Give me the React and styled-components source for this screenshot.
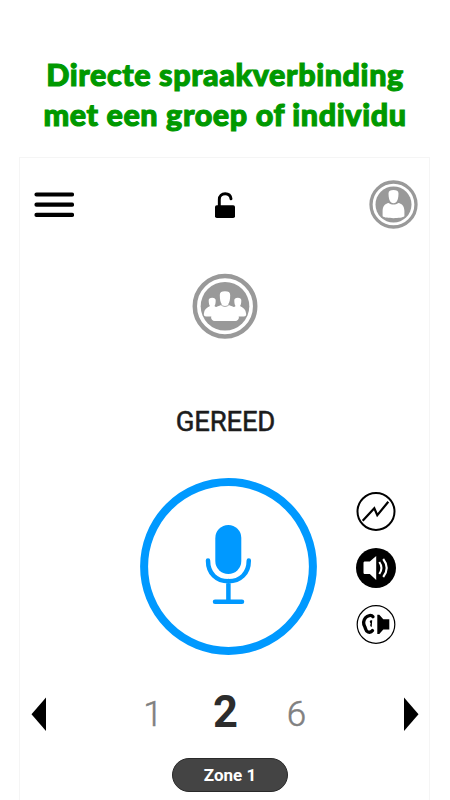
import React from "react";
import styled, { createGlobalStyle } from "styled-components";

const GlobalStyle = createGlobalStyle`
  * { box-sizing: border-box; }
  body { margin: 0; background: #fff; overflow: hidden; }
  svg { display: block; }
`;

const Page = styled.main`
  display: flex;
  flex-direction: column;
  width: 450px;
  height: 800px;
  overflow: hidden;
  background: #fff;
  font-family: Roboto, sans-serif;
`;

const Headline = styled.h1`
  display: flex;
  flex-direction: column;
  align-items: center;
  height: 157px;
  margin: 0;
  padding-top: 54px;
  color: #009900;
  font: 900 30.5px/40px Lato, sans-serif;
  -webkit-text-stroke: 1.1px #009900;
  white-space: nowrap;
`;

const HeadlineLine = styled.span`
  letter-spacing: ${({ $tracking }) => $tracking}px;
`;

const Phone = styled.section`
  display: flex;
  flex-direction: column;
  width: 411px;
  height: 643px;
  margin: 0 19px;
  border: solid #f5f5f5;
  border-width: 1px 1px 0;
`;

const TopBar = styled.header`
  display: flex;
  align-items: center;
  justify-content: space-between;
  height: 93px;
  padding: 0 11px 0 14px;
`;

const IconButton = styled.button`
  display: block;
  padding: 0;
  border: 0;
  background: none;
`;

const LockButton = styled(IconButton)`
  margin-left: 6px;
`;

const GroupRow = styled.div`
  display: flex;
  justify-content: center;
  margin: 22px 0 0 1px;
`;

const Status = styled.p`
  height: 34px;
  margin: 66px 0 0 2px;
  color: #1c1c1c;
  font-size: 27.5px;
  font-weight: 400;
  -webkit-text-stroke: 0.5px #1c1c1c;
  line-height: 34px;
  letter-spacing: ${({ $tracking }) => $tracking}px;
  text-align: center;
`;

const TalkRow = styled.div`
  display: flex;
  align-items: center;
  height: 178px;
  margin-top: 39px;
  padding-left: 120px;
`;

const Modes = styled.div`
  display: flex;
  flex-direction: column;
  gap: 14px;
  margin-left: 37px;
  padding-top: 2px;
`;

const Pager = styled.nav`
  display: grid;
  grid-template-columns: 16px 70px 72px 73px 69px 72px 16px;
  align-items: start;
  height: 61px;
  margin-top: 40px;
  padding-left: 11px;
`;

const Arrow = styled(IconButton)`
  grid-column: ${({ $column }) => $column};
  margin-top: 1px;
`;

const Channel = styled.span`
  grid-column: ${({ $column }) => $column};
  height: 44px;
  color: ${({ $active }) => ($active ? "#2c2c2c" : "#808080")};
  font-size: ${({ $active }) => ($active ? 43.5 : 35)}px;
  font-weight: ${({ $active }) => ($active ? 700 : 300)};
  -webkit-text-stroke: ${({ $active }) => ($active ? 0 : 0.5)}px #808080;
  line-height: ${({ $active }) => ($active ? 33 : 37)}px;
  text-align: center;
`;

const Zone = styled.button`
  align-self: center;
  width: 116px;
  height: 34px;
  margin: 1px 0 0 11px;
  padding: 0;
  border: 1px solid #292929;
  border-radius: 17px;
  background: #444;
  color: #fff;
  font: 700 17px/32px Roboto, sans-serif;
`;

const MenuIcon = () => (
  <svg width="40" height="28" viewBox="34 190.5 40 28">
    <path d="M36.5 194H72M36.5 204.200H72M36.5 214.400H72" stroke="#000" strokeWidth="4.2" strokeLinecap="round" />
  </svg>
);

const LockIcon = () => (
  <svg width="22" height="28" viewBox="0 0 22 28">
    <rect x="1" y="14.300" width="20" height="12.700" rx="1.800" />
    <path d="M5.300 15V8.500C5.300 4.900 7.800 2.800 11.200 2.800c3 0 5.400 2 5.800 5" fill="none" stroke="#000" strokeWidth="2.900" strokeLinecap="round" />
  </svg>
);

const AvatarIcon = () => (
  <svg width="49" height="49" viewBox="0 0 49 49">
    <circle cx="24.500" cy="24.500" r="22.500" fill="#fff" stroke="#999" strokeWidth="3.300" />
    <circle cx="24.500" cy="24.500" r="18" fill="#999" />
    <path fill="#fff" d="M19.500 13.500c0-2.500 2-3.400 5-3.400s5 .9 5 3.400c0 4.500-1 7.500-2.700 9.100q-2.300 1.500-4.600 0C20.500 21 19.500 18 19.500 13.500ZM19.800 22.900c1.300 1.200 3 1.600 4.700 1.600s3.400-.4 4.700-1.600c4.100.7 6 3.400 6.200 7.900v5.500c-2.800 2.500-19 2.500-21.800 0v-5.500c.2-4.500 2.100-7.200 6.200-7.900Z" />
  </svg>
);

const GroupIcon = () => (
  <svg width="66" height="66" viewBox="0 0 66 66">
    <circle cx="33" cy="33.200" r="30.200" fill="#fff" stroke="#999" strokeWidth="4.500" />
    <circle cx="33" cy="33.200" r="24.300" fill="#999" />
    <g fill="#fff">
      <path d="M27.800 22c0-2.800 1.700-3.800 5.200-3.800s5.200 1 5.200 3.800c0 4.700-.7 7.500-2 9.200 1.100 2.200 7.900 2 9.300 6l1.400 7.400c0 1.500-1.300 3.500-3.600 3.500H22.700c-2.300 0-3.600-2-3.600-3.500l1.400-7.400c1.400-4 8.200-3.800 9.300-6-1.300-1.700-2-4.500-2-9.200Z" />
      <path d="M16.700 27.400c0-1.900 1.200-2.700 3.500-2.700s3.500.8 3.500 2.700c0 2.500-.5 4.600-1.300 5.700 1.100 1.200 3.500 1.300 4.300 3.200v7.100H14.100c-1.600 0-2.600-1-2.200-3 .5-3.700 2.300-5.400 6.100-7.300-.8-1.100-1.300-3.200-1.300-5.700ZM49.300 27.400c0-1.900-1.200-2.700-3.500-2.700s-3.500.8-3.500 2.700c0 2.500.5 4.600 1.300 5.700-1.100 1.200-3.500 1.300-4.300 3.200v7.100h12.600c1.600 0 2.600-1 2.200-3-.5-3.700-2.300-5.400-6.100-7.300.8-1.100 1.300-3.200 1.300-5.700Z" />
    </g>
    <path d="M28.800 31.700q4.200 3.600 8.400 0" fill="none" stroke="#999" strokeWidth=".8" />
  </svg>
);

const TalkIcon = () => (
  <svg width="178" height="178" viewBox="0 0 178 178">
    <circle cx="88.500" cy="88.500" r="84.400" fill="none" stroke="#0099ff" strokeWidth="8" />
    <rect x="75.300" y="47" width="26" height="49" rx="13" fill="#0099ff" />
    <path d="M68 82.500c0 13 8.500 20.800 20.400 20.800s20.400-7.800 20.400-20.800M88.400 103v20.800M75 123.800h27" fill="none" stroke="#0099ff" strokeWidth="4.500" strokeLinecap="round" />
  </svg>
);

const PulseIcon = () => (
  <svg width="42" height="42" viewBox="0 0 42 42">
    <circle cx="21" cy="20.500" r="18.500" fill="#fff" stroke="#000" strokeWidth="2" />
    <path d="M7.700 29.800 19.300 17.200l3 7L33.300 10.800" fill="none" stroke="#000" strokeWidth="2.200" />
  </svg>
);

const SpeakerIcon = () => (
  <svg width="42" height="42" viewBox="0 0 42 42">
    <circle cx="21" cy="21" r="20" />
    <path d="M10 14.500h4.800l6.400-5.500v24l-6.400-6H10c-1 0-1.500-.5-1.500-1.500V16c0-1 .5-1.500 1.500-1.500Z" fill="#fff" />
    <path d="M24.300 15q4.300 6 0 12M28.200 12q7 9 0 18" fill="none" stroke="#fff" strokeWidth="2.100" />
  </svg>
);

const EarIcon = () => (
  <svg width="42" height="42" viewBox="0 0 42 42">
    <circle cx="21" cy="21.500" r="18.800" fill="#fff" stroke="#000" strokeWidth="1.200" />
    <path d="M18 13.700c-1.500-2-5.500-1.500-7.500 1-2.200 2.700-2.200 6.300-.7 9 .9 1.800.8 4.500 3.200 5.300 1.800.5 3.500 0 4.500-1.500" fill="none" stroke="#000" strokeWidth="3.300" strokeLinecap="round" />
    <path d="M17.200 17.200c-2.500-.4-3.200 1-1.500 3.300-.9 1.700-.6 3 1 3.500Z" />
    <path d="M22.300 11.700h2l4 4.600h6V26.500h-6l-4 4.500h-2Z" />
  </svg>
);

const Triangle = ({ flip }) => (
  <svg width="16" height="35" viewBox="0 0 16 35">
    <path d={flip ? "M1 .5v33.500L15.500 17.200Z" : "M15 .5v33.500L.5 17.200Z"} />
  </svg>
);

export default function App() {
  return (
    <Page>
      <GlobalStyle />
      <Headline>
        <HeadlineLine $tracking={0.6}>Directe spraakverbinding</HeadlineLine>
        <HeadlineLine $tracking={0.6}>met een groep of individu</HeadlineLine>
      </Headline>
      <Phone>
        <TopBar>
          <IconButton aria-label="Menu"><MenuIcon /></IconButton>
          <LockButton aria-label="Ontgrendeld"><LockIcon /></LockButton>
          <IconButton aria-label="Profiel"><AvatarIcon /></IconButton>
        </TopBar>
        <GroupRow><GroupIcon /></GroupRow>
        <Status $tracking={-0.2}>GEREED</Status>
        <TalkRow>
          <IconButton aria-label="Spreken"><TalkIcon /></IconButton>
          <Modes>
            <IconButton aria-label="Signaal"><PulseIcon /></IconButton>
            <IconButton aria-label="Luidspreker"><SpeakerIcon /></IconButton>
            <IconButton aria-label="Oorstuk"><EarIcon /></IconButton>
          </Modes>
        </TalkRow>
        <Pager>
          <Arrow $column={1} aria-label="Vorige"><Triangle /></Arrow>
          <Channel $column={3}>1</Channel>
          <Channel $column={4} $active>2</Channel>
          <Channel $column={5}>6</Channel>
          <Arrow $column={7} aria-label="Volgende"><Triangle flip /></Arrow>
        </Pager>
        <Zone>Zone 1</Zone>
      </Phone>
    </Page>
  );
}
